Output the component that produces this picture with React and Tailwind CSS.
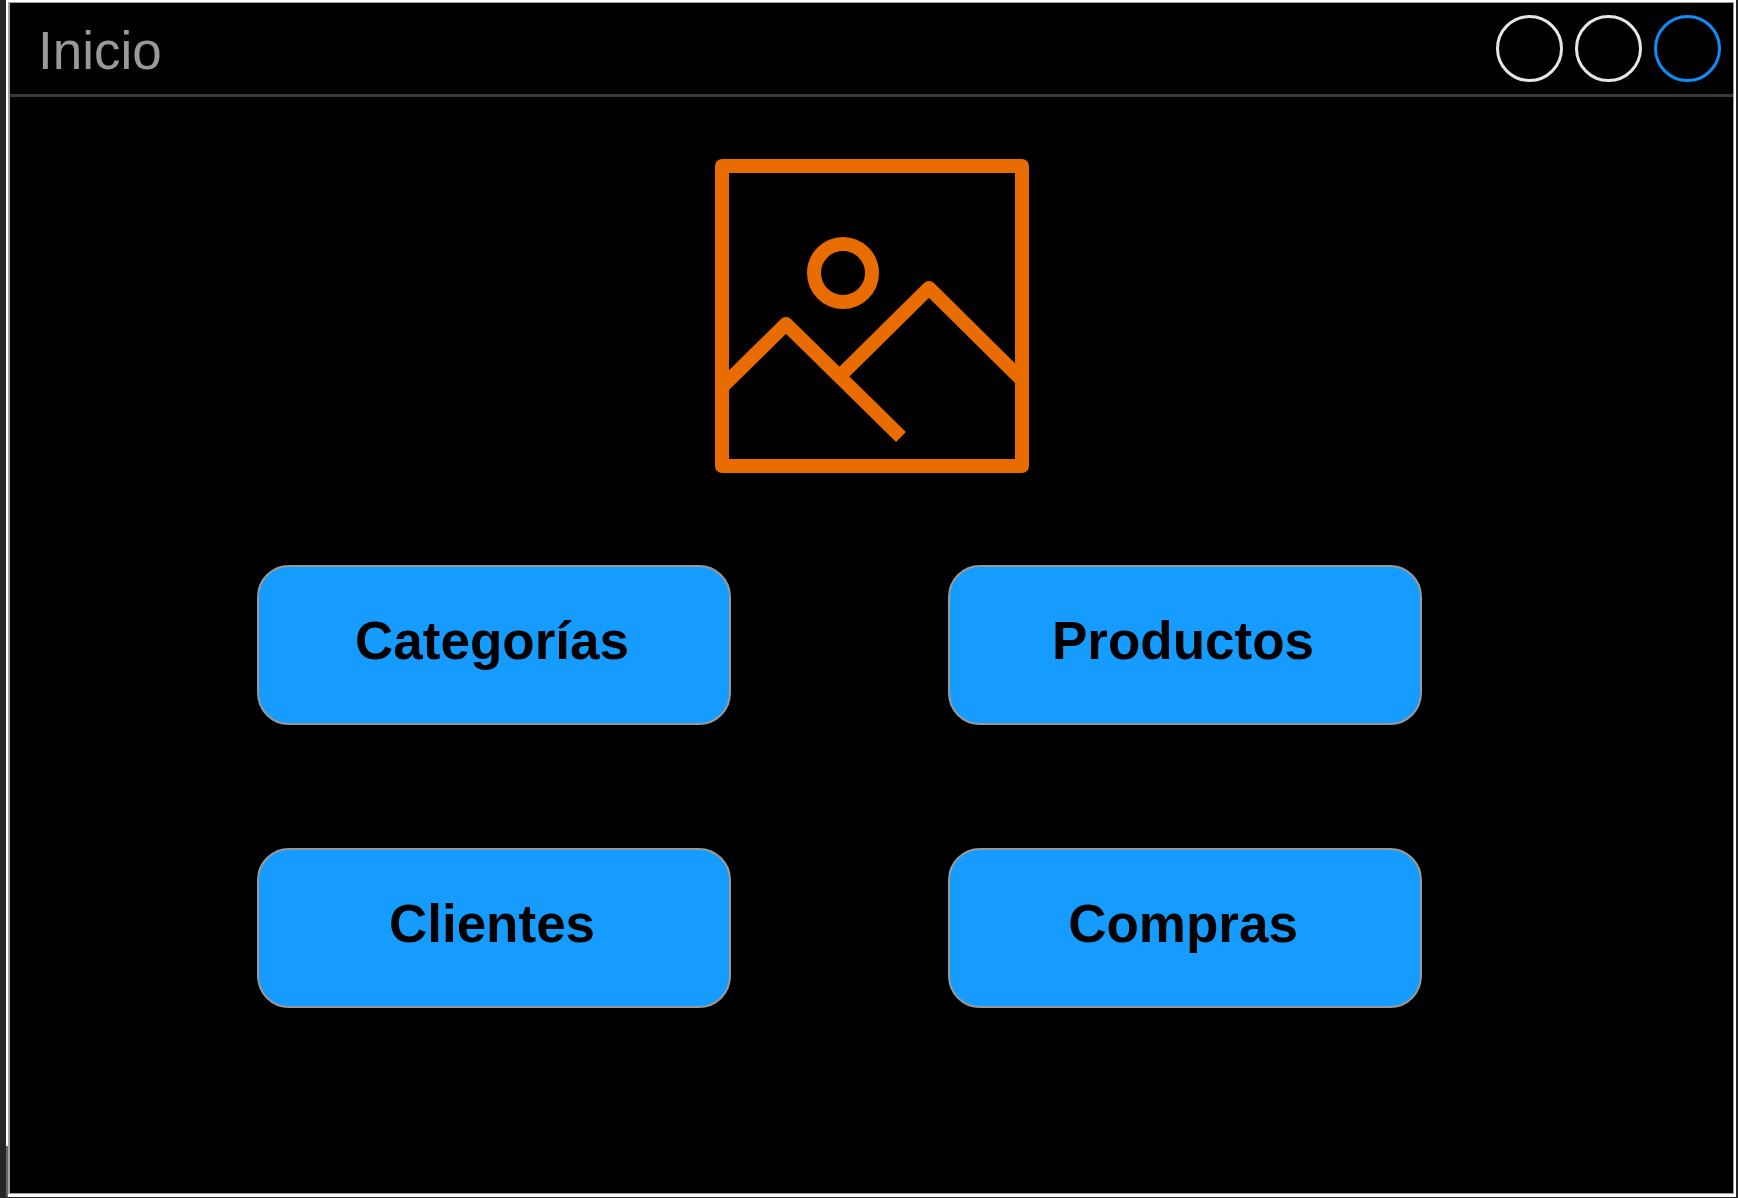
const sections = ["Categorías", "Productos", "Clientes", "Compras"];

const windowControls = [
  { label: "Minimizar", color: "border-[#e6e6e6]" },
  { label: "Maximizar", color: "border-[#e6e6e6]" },
  { label: "Cerrar", color: "border-[#0f8cf5]" },
];

function PictureIcon() {
  return (
    <svg
      className="h-[316px] w-[316px]"
      viewBox="0 0 316 316"
      fill="none"
      stroke="#e86c00"
      strokeWidth="14"
      role="img"
      aria-label="Imagen"
    >
      <rect x="8" y="8" width="300" height="300" strokeLinejoin="round" />
      <circle cx="129" cy="115" r="29" />
      <path d="M9 228 L72 166 L187 279" strokeLinejoin="round" />
      <path d="M130 214 L215 130 L308 222" strokeLinejoin="round" />
    </svg>
  );
}

export default function App() {
  return (
    <div className="flex min-h-screen bg-[#262626] pr-[2px] pb-px pl-[6px] font-['Liberation_Sans',Arial,sans-serif]">
      <div className="flex w-[2px] flex-col">
        <div className="flex-1 bg-white" />
        <div className="h-[51px] bg-[#666666]" />
      </div>
      <div className="flex flex-1 bg-white pt-[2px] pr-[2px] pb-[3px]">
        <div className="flex flex-1 flex-col border border-l-2 border-[#a0a0a0] bg-black">
          <header className="flex h-[94px] items-center justify-between border-b-[3px] border-[#393939] pr-3 pl-7">
            <h1 className="pt-1 text-[53px] leading-[60px] text-[#999999]">Inicio</h1>
            <div className="flex gap-3">
              {windowControls.map(({ label, color }) => (
                <button
                  key={label}
                  type="button"
                  aria-label={label}
                  className={`size-[67px] rounded-full border-[3px] ${color}`}
                />
              ))}
            </div>
          </header>
          <main className="flex flex-col items-center pt-[61px]">
            <PictureIcon />
            <nav className="mt-[91px] grid w-full grid-cols-2 gap-x-[217px] gap-y-[123px] pr-[311px] pl-[247px]">
              {sections.map((name) => (
                <button
                  key={name}
                  type="button"
                  className="h-40 rounded-[32px] border-2 border-[#999999] bg-[#169cff] pr-1 pb-2 text-[53px] leading-[60px] font-bold text-black"
                >
                  {name}
                </button>
              ))}
            </nav>
          </main>
        </div>
      </div>
    </div>
  );
}
